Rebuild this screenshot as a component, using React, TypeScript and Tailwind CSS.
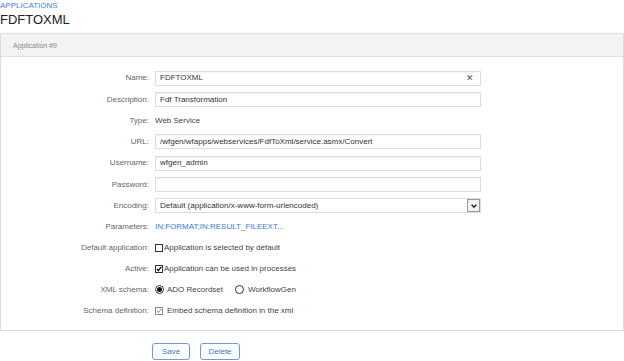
import React from "react";

const Label: React.FC<{ children: React.ReactNode }> = ({ children }) => (
  <div className="w-[148px] shrink-0 text-right text-[#666]">{children}</div>
);

const Row: React.FC<{ label: string; children: React.ReactNode; tall?: boolean }> = ({ label, children, tall }) => (
  <div className={`flex items-center gap-[6px] ${tall ? "h-[22px]" : "h-[21px]"}`}>
    <Label>{label}:</Label>
    <div className="flex items-center">{children}</div>
  </div>
);

const Input: React.FC<{ value?: string; clear?: boolean }> = ({ value = "", clear }) => (
  <div className="flex h-[15px] w-[326px] items-center justify-between border border-[#dcdcdc] bg-white px-[4px] text-[#333] shadow-[inset_0_1px_1px_rgba(0,0,0,0.04)]">
    <span>{value}</span>
    {clear && <span className="pr-[2px] text-[9px] leading-none text-[#555]">✕</span>}
  </div>
);

const Box: React.FC<{ checked?: boolean; light?: boolean }> = ({ checked, light }) => (
  <span
    className={`flex h-[8px] w-[8px] items-center justify-center border ${light ? "border-[#888]" : "border-[#333]"} bg-white`}
  >
    {checked && (
      <svg viewBox="0 0 10 10" className="h-[8px] w-[8px]">
        <path d="M1.5 5 L4 7.5 L8.8 1.5" fill="none" stroke={light ? "#555" : "#000"} strokeWidth={light ? 1.3 : 2} />
      </svg>
    )}
  </span>
);

const Radio: React.FC<{ checked?: boolean }> = ({ checked }) => (
  <span className="flex h-[9px] w-[9px] items-center justify-center rounded-full border border-[#333] bg-white">
    {checked && <span className="h-[5px] w-[5px] rounded-full bg-[#111]" />}
  </span>
);

export default function App() {
  return (
    <div className="h-[361px] w-[624px] bg-white font-['Liberation_Sans',Arial,sans-serif] text-[8px] leading-none">
      <div className="pt-[2px] text-[8px] text-[#4a7fd6]">APPLICATIONS</div>
      <div className="mt-[3px] text-[13px] text-[#222]">FDFTOXML</div>

      <div className="mt-[7px] border border-[#dedede]">
        <div className="flex h-[23px] items-center border-b border-[#e2e2e2] bg-[#f3f3f3] pl-[12px] text-[7px] text-[#888]">
          Application #9
        </div>
        <div className="pt-[10px] pb-[9px]">
          <Row label="Name" tall>
            <Input value="FDFTOXML" clear />
          </Row>
          <Row label="Description">
            <Input value="Fdf Transformation" />
          </Row>
          <Row label="Type">
            <span className="text-[#444]">Web Service</span>
          </Row>
          <Row label="URL">
            <Input value="/wfgen/wfapps/webservices/FdfToXml/service.asmx/Convert" />
          </Row>
          <Row label="Username" tall>
            <Input value="wfgen_admin" />
          </Row>
          <Row label="Password">
            <Input />
          </Row>
          <Row label="Encoding">
            <div className="flex h-[15px] w-[326px] items-center justify-between border border-[#dcdcdc] bg-white pl-[4px] text-[#333]">
              <span>Default (application/x-www-form-urlencoded)</span>
              <span className="flex h-[13px] w-[13px] items-center justify-center border border-[#999] bg-[#f2f2f2]">
                <svg viewBox="0 0 10 10" className="h-[8px] w-[8px]">
                  <path d="M2 3.5 L5 6.5 L8 3.5" fill="none" stroke="#111" strokeWidth="1.6" />
                </svg>
              </span>
            </div>
          </Row>
          <Row label="Parameters">
            <span className="text-[#3d7bd9]">IN:FORMAT;IN:RESULT_FILEEXT...</span>
          </Row>
          <Row label="Default application">
            <span className="flex items-center gap-[1px] text-[#444]">
              <Box />
              <span>Application is selected by default</span>
            </span>
          </Row>
          <Row label="Active">
            <span className="flex items-center gap-[1px] text-[#444]">
              <Box checked />
              <span>Application can be used in processes</span>
            </span>
          </Row>
          <Row label="XML schema">
            <span className="flex items-center text-[#444]">
              <Radio checked />
              <span className="ml-[3px]">ADO Recordset</span>
              <span className="ml-[12px]">
                <Radio />
              </span>
              <span className="ml-[4px]">WorkflowGen</span>
            </span>
          </Row>
          <Row label="Schema definition">
            <span className="flex items-center gap-[4px] text-[#444]">
              <Box checked light />
              <span>Embed schema definition in the xml</span>
            </span>
          </Row>
        </div>
      </div>

      <div className="mt-[12px] flex gap-[10px] pl-[152px]">
        <button className="h-[17px] w-[38px] rounded-[3px] border border-[#6c9be0] bg-white text-[8px] text-[#3d72c9]">
          Save
        </button>
        <button className="h-[17px] w-[40px] rounded-[3px] border border-[#6c9be0] bg-white text-[8px] text-[#3d72c9]">
          Delete
        </button>
      </div>
    </div>
  );
}
